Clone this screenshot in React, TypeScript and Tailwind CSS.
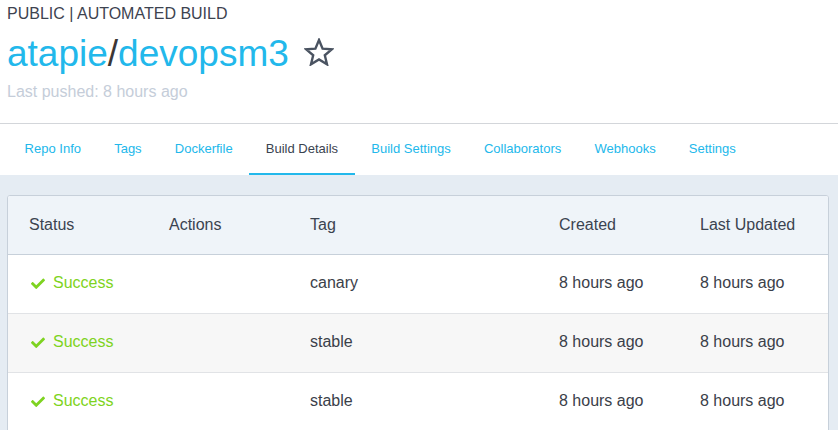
import React from 'react'

const tabs = ['Repo Info', 'Tags', 'Dockerfile', 'Build Details', 'Build Settings', 'Collaborators', 'Webhooks', 'Settings']

const builds = [
  { status: 'Success', tag: 'canary', created: '8 hours ago', updated: '8 hours ago' },
  { status: 'Success', tag: 'stable', created: '8 hours ago', updated: '8 hours ago' },
  { status: 'Success', tag: 'stable', created: '8 hours ago', updated: '8 hours ago' },
]

function CheckIcon() {
  return (
    <svg viewBox="0 0 512 400" className="w-[14px] h-[11px] mr-[8px]" fill="#7ed321">
      <path d="M173.898 391.404l-166.4-166.4c-9.997-9.997-9.997-26.206 0-36.204l36.203-36.204c9.997-9.998 26.207-9.998 36.204 0L192 264.69 432.095 24.596c9.997-9.997 26.207-9.997 36.204 0l36.203 36.204c9.997 9.997 9.997 26.206 0 36.204l-294.4 294.401c-9.998 9.997-26.207 9.997-36.204-.001z" />
    </svg>
  )
}

function StarIcon() {
  return (
    <svg viewBox="0 0 30 28" className="w-[30px] h-[28px] ml-[15px] mt-[4px]" fill="none" stroke="#4a5361" strokeWidth="2.4" strokeLinejoin="miter">
      <polygon points="15,2 18.6,10.6 27.8,11.3 20.8,17.3 23,26.3 15,21.4 7,26.3 9.2,17.3 2.2,11.3 11.4,10.6" />
    </svg>
  )
}

export default function App() {
  const cols = 'grid grid-cols-[140px_141px_249px_141px_1fr] pl-[21px] items-center'
  return (
    <div className="w-[838px] h-[430px] overflow-hidden bg-white" style={{ fontFamily: '"Liberation Sans", Arial, sans-serif' }}>
      {/* header */}
      <div className="px-[7px] pt-[5px]">
        <div className="text-[16px] leading-[18px] text-[#3d4350]">PUBLIC | AUTOMATED BUILD</div>
        <div className="flex items-start mt-[11px]">
          <div className="text-[37px] leading-[40px] text-[#22b8eb]">
            atapie<span className="text-[#3b3636]">/</span>devopsm3
          </div>
          <StarIcon />
        </div>
        <div className="mt-[9px] text-[16px] leading-[18px] text-[#c5cdd9]">Last pushed: 8 hours ago</div>
      </div>

      {/* tabs */}
      <div className="mt-[22px] border-t border-[#d3d6da] h-[52px] flex px-[8px]">
        {tabs.map((t) => (
          <div
            key={t}
            className={
              t === 'Build Details'
                ? 'px-[16.6px] pb-[1px] flex items-center text-[13px] text-[#3a4350] border-b-2 border-[#22b8eb] pt-[1px]'
                : 'px-[16.6px] pb-[2px] flex items-center text-[13px] text-[#22b8eb]'
            }
          >
            {t}
          </div>
        ))}
      </div>

      {/* builds table */}
      <div className="bg-[#e5ecf3] pt-[20px] pl-[7px] pr-[9px] h-full">
        <div className="bg-white border border-[#c7d0da] rounded-[3px] overflow-hidden">
          <div className={`${cols} h-[59px] bg-[#eff4f9] border-b border-[#c7d0da] text-[16px] text-[#3b4350]`}>
            <div>Status</div>
            <div>Actions</div>
            <div>Tag</div>
            <div>Created</div>
            <div>Last Updated</div>
          </div>
          {builds.map((b, i) => (
            <div
              key={i}
              className={`${cols} h-[59px] pb-[2px] border-b border-[#e1e3e6] text-[16px] text-[#3a4049] ${i % 2 === 1 ? 'bg-[#f7f7f7]' : 'bg-white'}`}
            >
              <div className="flex items-center pl-[2px] text-[#7ed321]">
                <CheckIcon />
                {b.status}
              </div>
              <div></div>
              <div>{b.tag}</div>
              <div>{b.created}</div>
              <div>{b.updated}</div>
            </div>
          ))}
        </div>
      </div>
    </div>
  )
}
